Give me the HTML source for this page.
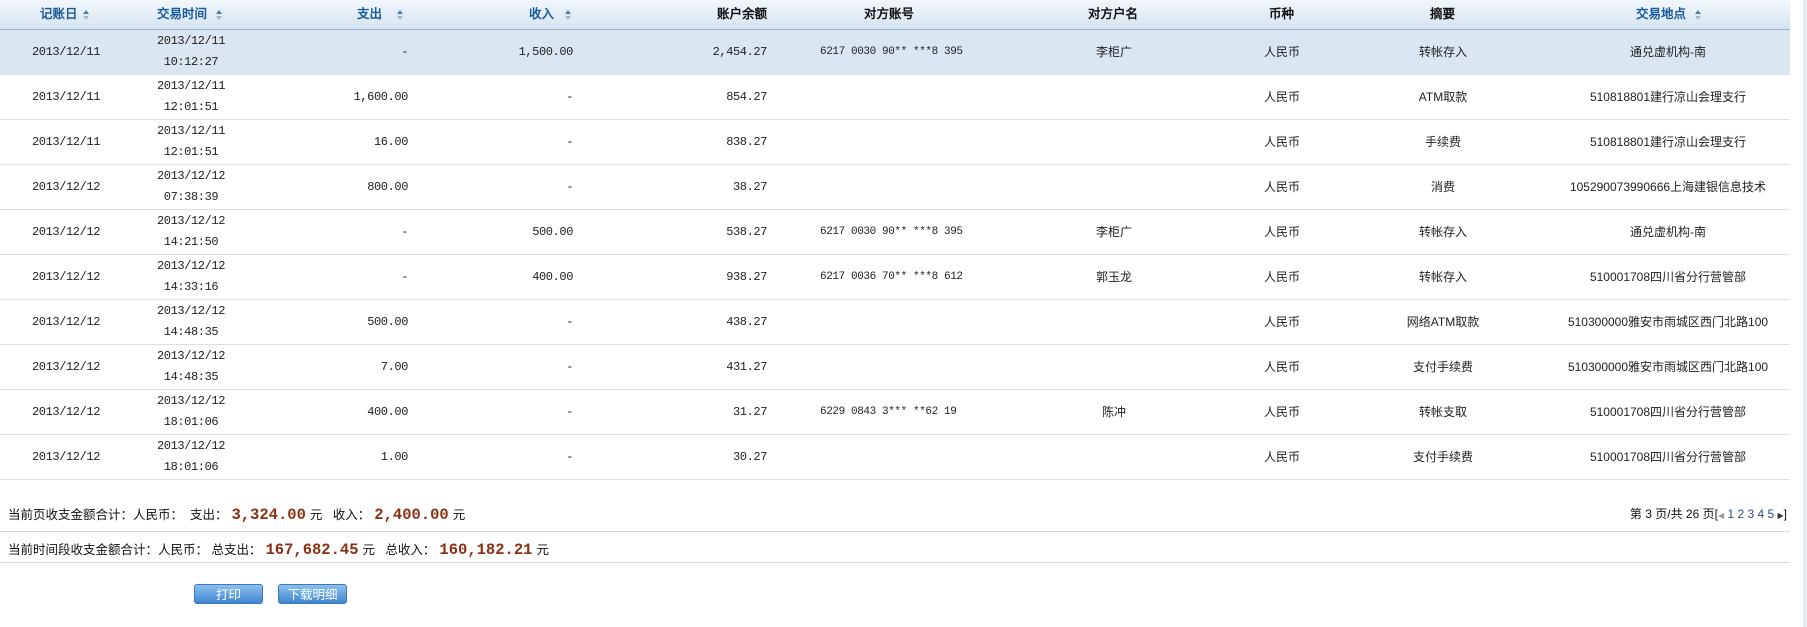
<!DOCTYPE html>
<html><head><meta charset="utf-8"><style>
body{margin:0;width:1807px;height:627px;background:#fff;position:relative;overflow:hidden;font-family:"Liberation Mono","WenQuanYi Zen Hei","Noto Sans CJK SC",monospace;font-size:12px;color:#222}
.hd{position:absolute;left:0;top:0;width:1790px;height:29px;background:linear-gradient(#f2f7fc,#d6e4f2);border-bottom:1px solid #9db3c9}
.hd span{position:absolute;top:0;line-height:29px;font-weight:bold;font-family:"Liberation Sans","WenQuanYi Zen Hei",sans-serif;font-size:12.5px;color:#111}
.hd span.b{color:#1b5a98}
.ar{position:absolute;top:10px;width:6px;height:10px}
.ar:before{content:"";position:absolute;left:0;top:0;border-left:3px solid transparent;border-right:3px solid transparent;border-bottom:4px solid #4a7fb5}
.ar:after{content:"";position:absolute;left:0;top:6px;border-left:3px solid transparent;border-right:3px solid transparent;border-top:4px solid #aab6c2}
.r{position:absolute;left:0;width:1790px;height:44px;border-bottom:1px solid #d8e0e8}
.r span{position:absolute;top:0;line-height:45px;white-space:nowrap;letter-spacing:-0.4px}
.r .cj{font-family:"Liberation Sans","WenQuanYi Zen Hei",sans-serif;letter-spacing:0;font-size:12px}
.c1{left:0;width:132px;text-align:center}
.c2{left:91px;width:200px;text-align:center;line-height:21px!important;top:1px!important}
.c3{right:1382px;text-align:right}
.c4{right:1217px;text-align:right}
.c5{right:1023px;text-align:right}
.c6{left:820px;font-size:11px}
.c7{left:1014px;width:200px;text-align:center}
.c8{left:1182px;width:200px;text-align:center}
.c9{left:1343px;width:200px;text-align:center}
.c10{left:1518px;width:300px;text-align:center}
.sum{position:absolute;left:8px;font-family:"Liberation Sans","WenQuanYi Zen Hei",sans-serif;font-size:12.5px;color:#111;white-space:nowrap}
.amt{font-family:"Liberation Mono",monospace;font-weight:bold;font-size:15.5px;color:#8a2e14;margin:0 4px}
.line{position:absolute;left:0;width:1790px;height:1px;background:#d3dbe3}
.btn{position:absolute;top:584px;height:20px;width:69px;border:1px solid #3d78b8;border-radius:3px;background:linear-gradient(#8cc0ee,#3f86d2);color:#fff;text-align:center;line-height:20px;font-family:"Liberation Sans","WenQuanYi Zen Hei",sans-serif;font-size:12.5px;box-sizing:border-box}
</style></head><body>
<div class="hd">
<span class="b" style="left:40px">记账日</span><i class="ar" style="left:83px"></i>
<span class="b" style="left:157px">交易时间</span><i class="ar" style="left:216px"></i>
<span class="b" style="left:357px">支出</span><i class="ar" style="left:397px"></i>
<span class="b" style="left:529px">收入</span><i class="ar" style="left:565px"></i>
<span style="left:717px">账户余额</span>
<span style="left:864px">对方账号</span>
<span style="left:1088px">对方户名</span>
<span style="left:1269px">币种</span>
<span style="left:1430px">摘要</span>
<span class="b" style="left:1636px">交易地点</span><i class="ar" style="left:1695px"></i>
</div>

<div class="r" style="top:30px;background:#dae6f2"><span class="c1">2013/12/11</span><span class="c2">2013/12/11<br>10:12:27</span><span class="c3">-</span><span class="c4">1,500.00</span><span class="c5">2,454.27</span><span class="c6">6217 0030 90** ***8 395</span><span class="c7 cj">李柜广</span><span class="c8 cj">人民币</span><span class="c9 cj">转帐存入</span><span class="c10 cj">通兑虚机构-南</span></div>
<div class="r" style="top:75px"><span class="c1">2013/12/11</span><span class="c2">2013/12/11<br>12:01:51</span><span class="c3">1,600.00</span><span class="c4">-</span><span class="c5">854.27</span><span class="c8 cj">人民币</span><span class="c9 cj">ATM取款</span><span class="c10 cj">510818801建行凉山会理支行</span></div>
<div class="r" style="top:120px"><span class="c1">2013/12/11</span><span class="c2">2013/12/11<br>12:01:51</span><span class="c3">16.00</span><span class="c4">-</span><span class="c5">838.27</span><span class="c8 cj">人民币</span><span class="c9 cj">手续费</span><span class="c10 cj">510818801建行凉山会理支行</span></div>
<div class="r" style="top:165px"><span class="c1">2013/12/12</span><span class="c2">2013/12/12<br>07:38:39</span><span class="c3">800.00</span><span class="c4">-</span><span class="c5">38.27</span><span class="c8 cj">人民币</span><span class="c9 cj">消费</span><span class="c10 cj">105290073990666上海建银信息技术</span></div>
<div class="r" style="top:210px"><span class="c1">2013/12/12</span><span class="c2">2013/12/12<br>14:21:50</span><span class="c3">-</span><span class="c4">500.00</span><span class="c5">538.27</span><span class="c6">6217 0030 90** ***8 395</span><span class="c7 cj">李柜广</span><span class="c8 cj">人民币</span><span class="c9 cj">转帐存入</span><span class="c10 cj">通兑虚机构-南</span></div>
<div class="r" style="top:255px"><span class="c1">2013/12/12</span><span class="c2">2013/12/12<br>14:33:16</span><span class="c3">-</span><span class="c4">400.00</span><span class="c5">938.27</span><span class="c6">6217 0036 70** ***8 612</span><span class="c7 cj">郭玉龙</span><span class="c8 cj">人民币</span><span class="c9 cj">转帐存入</span><span class="c10 cj">510001708四川省分行营管部</span></div>
<div class="r" style="top:300px"><span class="c1">2013/12/12</span><span class="c2">2013/12/12<br>14:48:35</span><span class="c3">500.00</span><span class="c4">-</span><span class="c5">438.27</span><span class="c8 cj">人民币</span><span class="c9 cj">网络ATM取款</span><span class="c10 cj">510300000雅安市雨城区西门北路100</span></div>
<div class="r" style="top:345px"><span class="c1">2013/12/12</span><span class="c2">2013/12/12<br>14:48:35</span><span class="c3">7.00</span><span class="c4">-</span><span class="c5">431.27</span><span class="c8 cj">人民币</span><span class="c9 cj">支付手续费</span><span class="c10 cj">510300000雅安市雨城区西门北路100</span></div>
<div class="r" style="top:390px"><span class="c1">2013/12/12</span><span class="c2">2013/12/12<br>18:01:06</span><span class="c3">400.00</span><span class="c4">-</span><span class="c5">31.27</span><span class="c6">6229 0843 3*** **62 19</span><span class="c7 cj">陈冲</span><span class="c8 cj">人民币</span><span class="c9 cj">转帐支取</span><span class="c10 cj">510001708四川省分行营管部</span></div>
<div class="r" style="top:435px"><span class="c1">2013/12/12</span><span class="c2">2013/12/12<br>18:01:06</span><span class="c3">1.00</span><span class="c4">-</span><span class="c5">30.27</span><span class="c8 cj">人民币</span><span class="c9 cj">支付手续费</span><span class="c10 cj">510001708四川省分行营管部</span></div>

<div class="sum" style="top:504px">当前页收支金额合计：人民币：&nbsp; 支出：<span class="amt">3,324.00</span>元 &nbsp; 收入：<span class="amt">2,400.00</span>元</div>
<div style="position:absolute;right:20px;top:505px;font-family:'Liberation Sans','WenQuanYi Zen Hei',sans-serif;font-size:12px;color:#111">第 3 页/共 26 页[<span style="color:#999;font-size:8px">◀</span> <span style="color:#2a4f7a">1 2 3 4 5</span> <span style="color:#333;font-size:8px">▶</span>]</div>
<div class="line" style="top:531px"></div>
<div class="sum" style="top:539px">当前时间段收支金额合计：人民币： 总支出：<span class="amt">167,682.45</span>元 &nbsp; 总收入：<span class="amt">160,182.21</span>元</div>
<div class="line" style="top:562px"></div>
<div class="btn" style="left:194px">打印</div>
<div class="btn" style="left:278px">下载明细</div>
<div style="position:absolute;left:1803px;top:0;width:4px;height:627px;background:#e8ecf0"></div>
</body></html>
